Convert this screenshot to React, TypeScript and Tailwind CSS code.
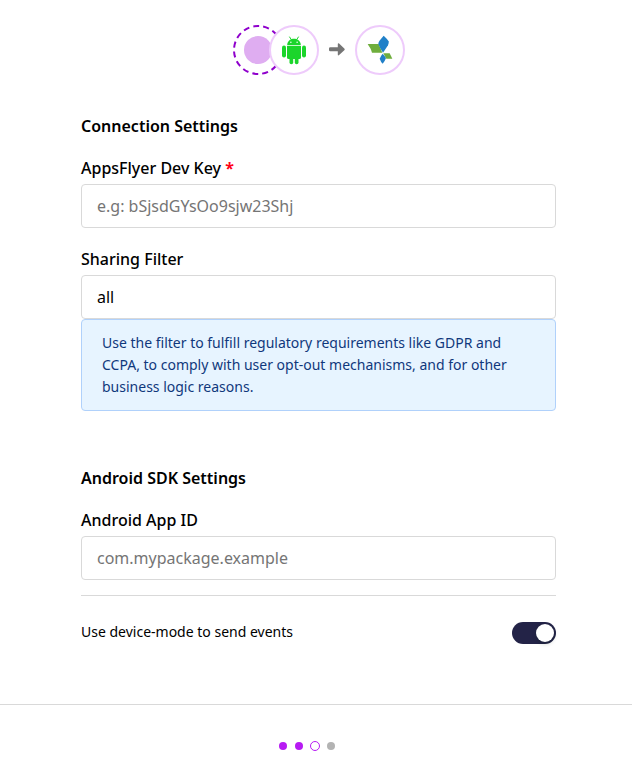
import React from "react";

function AndroidIcon() {
  return (
    <svg width="26" height="30" viewBox="0 0 26 30" fill="#1bd52b" className="shrink-0">
      <path d="M8.600 2l1.700 2.600M17.400 2l-1.700 2.600" stroke="#1bd52b" strokeWidth="1" strokeLinecap="round" />
      <path d="M6.200 10.200C6.200 6.300 9.200 3.800 13 3.800s6.800 2.500 6.800 6.400z" />
      <circle cx="9.900" cy="7.200" r=".75" fill="#fff" />
      <circle cx="16.100" cy="7.200" r=".75" fill="#fff" />
      <path d="M6 11h14v11.400a1.700 1.700 0 0 1-1.700 1.700H7.700A1.700 1.700 0 0 1 6 22.400z" />
      <rect x="1" y="10.600" width="4" height="12" rx="2" />
      <rect x="21" y="10.600" width="4" height="12" rx="2" />
      <rect x="8.500" y="20" width="3.700" height="9.200" rx="1.800" />
      <rect x="13.800" y="20" width="3.700" height="9.200" rx="1.800" />
    </svg>
  );
}

function AppsFlyerIcon() {
  return (
    <svg width="26" height="30" viewBox="156 60 78 90" className="shrink-0">
      <path d="M158 87h33l11 26h-31q-2-7-5-13q-4-6-8-13z" fill="#6fae3d" />
      <path d="M206 62q9 8 15 17q1 6-2 12q-7 11-15 22q-9-12-14-26q0-5 3-9q6-8 13-16z" fill="#2080c8" />
      <path d="M205 115h19l8 16h-18z" fill="#6fae3d" />
      <path d="M203 116q6 6 10 13q-3 9-10 17q-6-6-9-15q3-8 9-15z" fill="#2080c8" />
    </svg>
  );
}

function Field({ label, required, placeholder, value }: { label: string; required?: boolean; placeholder?: string; value?: string }) {
  return (
    <label className="block">
      <span className="block h-8 text-base leading-8 font-medium">
        {label}
        {required && <span className="font-bold text-[#ff0018]"> *</span>}
      </span>
      <input
        className="block h-11 w-full rounded-[4px] border border-[#d9d9d9] bg-white px-[15px] text-base text-black outline-none placeholder:text-[#757575]"
        placeholder={placeholder}
        defaultValue={value}
      />
    </label>
  );
}

export default function App() {
  return (
    <main className="flex h-[778px] w-full flex-col bg-white font-['Noto_Sans',sans-serif] text-black">
      <div className="mt-[25px] ml-[233px] flex h-[50px] items-center">
        <div className="relative flex size-[50px] items-center justify-center">
          <svg className="absolute inset-0" width="50" height="50" fill="none">
            <circle cx="25" cy="25" r="24" stroke="#8f00cc" strokeWidth="2" strokeDasharray="6 4.053" strokeDashoffset="3" />
          </svg>
          <span className="size-7 rounded-full bg-[#dfadf1]" />
        </div>
        <div className="relative -ml-[14px] flex size-[50px] items-center justify-center rounded-full border-2 border-[#eecbfb] bg-white">
          <AndroidIcon />
        </div>
        <svg className="mx-[10px] mb-[2px]" width="16" height="14" viewBox="0 0 16 14">
          <path d="M1.300 5.300h7.500V2.200q0-1.700 1.300-.7l5.200 4.900q.9.900 0 1.800l-5.200 4.900q-1.300 1-1.300-.7V9.300H1.300Q0 9.300 0 8V6.600Q0 5.300 1.300 5.300z" fill="#757575" />
        </svg>
        <div className="flex size-[50px] items-center justify-center rounded-full border-2 border-[#eecbfb] bg-white">
          <AppsFlyerIcon />
        </div>
      </div>

      <form className="mt-[39px] ml-[81px] w-[475px]">
        <h2 className="text-base leading-6 font-semibold">Connection Settings</h2>
        <div className="mt-[14px]">
          <Field label="AppsFlyer Dev Key" required placeholder="e.g: bSjsdGYsOo9sjw23Shj" />
        </div>
        <div className="mt-[15px]">
          <Field label="Sharing Filter" value="all" />
        </div>
        <p className="h-[92px] rounded-[4px] border border-[#b0d1fb] bg-[#e7f4ff] px-5 py-3 text-sm leading-[22px] text-[#10387c]">
          Use the filter to fulfill regulatory requirements like GDPR and CCPA, to comply with user opt-out mechanisms, and for other business logic reasons.
        </p>

        <h2 className="mt-[55px] text-base leading-6 font-semibold">Android SDK Settings</h2>
        <div className="mt-[14px]">
          <Field label="Android App ID" placeholder="com.mypackage.example" />
        </div>
        <div className="mt-[15px] flex items-start justify-between border-t border-[#d9d9d9] pt-[26px]">
          <span className="text-sm leading-5">Use device-mode to send events</span>
          <button type="button" role="switch" aria-checked="true" className="flex h-[22px] w-11 items-center justify-end rounded-full bg-[#232347] pr-[2px]">
            <span className="size-[18px] rounded-full bg-white shadow-[0_2px_4px_rgba(0,35,11,0.2)]" />
          </button>
        </div>
      </form>

      <footer className="mt-[60px] flex items-start border-t border-[#d9d9d9] pt-9 pl-[278px]">
        <div className="flex h-[10px] items-center">
          <span className="ml-px size-2 rounded-full bg-[#b71bf3]" />
          <span className="ml-2 size-2 rounded-full bg-[#b71bf3]" />
          <span className="ml-[7px] size-[10px] rounded-full border border-[#b71bf3]" />
          <span className="ml-[7px] size-2 rounded-full bg-[#b3b3b3]" />
        </div>
      </footer>
    </main>
  );
}
